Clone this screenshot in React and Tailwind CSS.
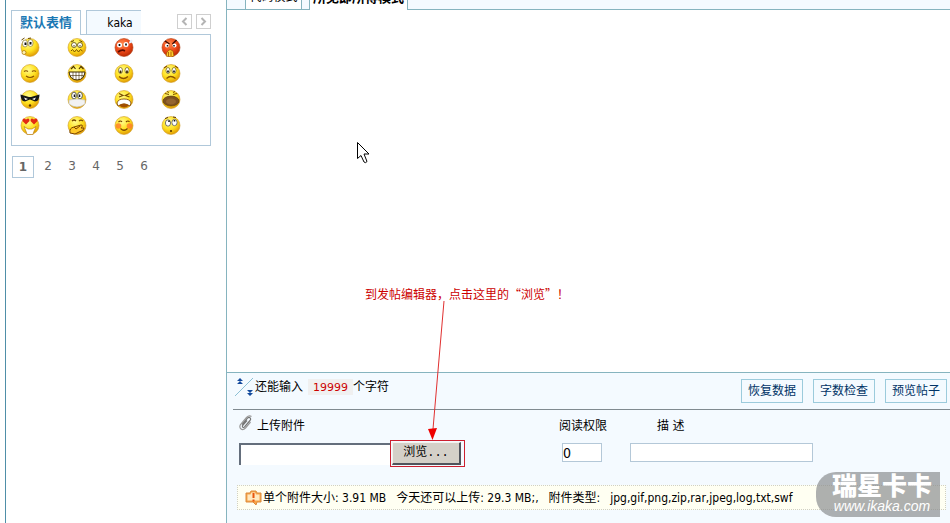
import { useState } from "react";

const smileys = [
  {
    name: "whistle",
    features: (
      <>
        <ellipse cx="5" cy="6.500" rx="2.600" ry="3.500" fill="#fff" stroke="#8a7a30" strokeWidth=".7" />
        <ellipse cx="10.500" cy="6" rx="2.600" ry="3.500" fill="#fff" stroke="#8a7a30" strokeWidth=".7" />
        <path d="M5.500 5.500v2.500M10.500 5v2.500" stroke="#111" strokeWidth="2" />
        <path d="M1.500 3l3-2M8 1.500l3-.5" stroke="#6b4a00" />
        <circle cx="4" cy="15.500" r="2" fill="#fff3b0" stroke="#a87000" strokeWidth=".7" />
      </>
    ),
  },
  {
    name: "queasy",
    features: (
      <>
        <circle cx="7" cy="8" r="2.500" fill="#fff" stroke="#5b4700" strokeWidth=".8" />
        <circle cx="13" cy="8" r="2.500" fill="#fff" stroke="#5b4700" strokeWidth=".8" />
        <path d="M7 8v1.500M13 8v1.500M4 5l3-1.500M12.500 3.500L15.500 5" stroke="#5b4700" />
        <path d="M4 14l1.500-1.500L7.500 15l2-2.500 2 2.500 2-2.500 2 1.500" stroke="#7a4b00" />
      </>
    ),
  },
  {
    name: "embarrassed",
    red: true,
    features: (
      <>
        <circle cx="5.500" cy="8" r="2.500" fill="#fff" />
        <circle cx="12" cy="7.500" r="2.500" fill="#fff" />
        <path d="M5.500 7v2M12 6.500v2" stroke="#111" strokeWidth="1.700" />
        <path d="M4 15q4-3 7-1" stroke="#5a0b00" strokeWidth="1.700" />
        <path d="M15 6.500q5-1 3-4-3 1-3 4z" fill="#e4f0ff" />
      </>
    ),
  },
  {
    name: "furious",
    red: true,
    features: (
      <>
        <path d="M4 4l4.500 3M15.500 3l-4 4" stroke="#3a0900" strokeWidth="1.500" />
        <circle cx="6" cy="8.500" r="2" fill="#fff" />
        <circle cx="13.500" cy="8.500" r="2" fill="#fff" />
        <path d="M6.500 8v1.500M13 8v1.500" stroke="#111" strokeWidth="1.500" />
        <path d="M5 19l1-4 3-2.500 3 1.500 1 5-3 1z" fill="#ffd02e" stroke="#a14a00" strokeWidth=".7" />
        <path d="M7.500 15v4M10 14.500V19" stroke="#a14a00" strokeWidth=".8" />
      </>
    ),
  },
  {
    name: "content",
    features: (
      <path d="M4 8.500q2-1.500 4 0M12 8.500q2-1.500 4 0M6 13q4 3 8 0" stroke="#8a5200" strokeWidth="1.200" />
    ),
  },
  {
    name: "grin",
    features: (
      <>
        <path d="M4 6l2.500-2.500L8.500 6M12 6l2-2.500L16.500 6" stroke="#4a3000" strokeWidth="1.200" />
        <path d="M2 9h16q-1 8-8 8T2 9z" fill="#fff" stroke="#3f2b00" />
        <path d="M3 12.500h14M6 9v7M9 9v8M12 9v8M15 9v6.500" stroke="#3f2b00" strokeWidth=".6" />
      </>
    ),
  },
  {
    name: "smile",
    features: (
      <>
        <ellipse cx="6.500" cy="7.500" rx="2" ry="3" fill="#fff" stroke="#665100" strokeWidth=".7" />
        <ellipse cx="13" cy="7.500" rx="2" ry="3" fill="#fff" stroke="#665100" strokeWidth=".7" />
        <path d="M6.500 7.500v2.500M13 7.500v2.500" stroke="#3d2900" strokeWidth="1.800" />
        <path d="M5 13.500q4.500 4 9 0" stroke="#8a5200" strokeWidth="1.200" />
      </>
    ),
  },
  {
    name: "sad",
    features: (
      <>
        <ellipse cx="7" cy="7.500" rx="2" ry="3" fill="#fff" stroke="#665100" strokeWidth=".7" />
        <ellipse cx="13" cy="7.500" rx="2" ry="3" fill="#fff" stroke="#665100" strokeWidth=".7" />
        <path d="M7 7.500v2M13 7.500v2" stroke="#222" strokeWidth="1.800" />
        <path d="M3 5l3-2M14 3l3 2M5.500 15.500q4-4 9 0" stroke="#8a5200" strokeWidth="1.200" />
      </>
    ),
  },
  {
    name: "ninja",
    features: (
      <>
        <path d="M.5 5.500L9 8h2l8.500-2.500q0 6.500-4.500 7L10 10.500l-5 2Q.5 12 .5 5.500z" fill="#161616" />
        <path d="M4 8.500l4 1.500-2.500 1zM16 8.500L12 10l2.500 1z" fill="#fff" />
        <circle cx="10" cy="16.500" r="1.200" fill="#5a3500" />
      </>
    ),
  },
  {
    name: "mask",
    features: (
      <>
        <ellipse cx="7" cy="6.500" rx="2.400" ry="3.400" fill="#fff" stroke="#333" strokeWidth=".8" />
        <ellipse cx="13" cy="6.500" rx="2.400" ry="3.400" fill="#fff" stroke="#333" strokeWidth=".8" />
        <path d="M7.500 5.500v2.500M12.500 5.500v2.500" stroke="#111" strokeWidth="1.600" />
        <path d="M2 11q8-2 16 0v4q-8 6-16 0z" fill="#f2f2f2" stroke="#c4c0b0" strokeWidth=".7" />
      </>
    ),
  },
  {
    name: "crying",
    features: (
      <>
        <path d="M5 4.500l4 2-4 1.500M15.500 4.500l-4 2 4 1.500" stroke="#7a4b00" strokeWidth="1.200" />
        <path d="M3 14q1-4 7-4t7 4l-1 3q-6-4-12 0z" fill="#fff" stroke="#7a4300" strokeWidth=".8" />
        <path d="M5 16.500q5-4 10 0-5 4-10 0z" fill="#a04e00" />
      </>
    ),
  },
  {
    name: "yawn",
    features: (
      <>
        <path d="M4 4.500l4 1M16 4.500l-4 1M6 2.500l2 1M14 2.500l-2 1" stroke="#7a4b00" />
        <ellipse cx="10" cy="12" rx="8" ry="5" fill="#7c501f" stroke="#553300" strokeWidth=".6" />
        <ellipse cx="10" cy="12.500" rx="5" ry="3" fill="#94652f" />
      </>
    ),
  },
  {
    name: "love",
    features: (
      <>
        <path d="M6 9.500L2.500 6q0-4 3.500-1.500Q9.500 2 9.500 6zM14 9.500L10.500 6q0-4 3.500-1.500 3.500-2.500 3.500 1.500z" fill="#e32a12" />
        <path d="M4 11.500l4 2.500h4l4-2.500-2.500 6-.5 2H7l-.5-2z" fill="#fff" stroke="#b07000" strokeWidth=".6" />
      </>
    ),
  },
  {
    name: "giggle",
    features: (
      <>
        <path d="M5 6q2-2 4 0M12 6q2-2 4 0" stroke="#7a4b00" strokeWidth="1.200" />
        <path d="M3 18q-1-5 4-6l7-2q3 0 0 3h3q0 3-5 4l-4 2z" fill="#ffc928" stroke="#7a4300" />
        <path d="M7 12l2 2 4-3" stroke="#7a4300" />
      </>
    ),
  },
  {
    name: "blush",
    features: (
      <>
        <circle cx="4.500" cy="11" r="2.800" fill="#ff7a2a" opacity=".8" />
        <circle cx="15.500" cy="11" r="2.800" fill="#ff7a2a" opacity=".8" />
        <path d="M4.500 7q2-2 3.500 0M12 7q2-2 3.500 0M6.500 13.500q3.500 3.500 7 0" stroke="#7a4300" strokeWidth="1.200" />
      </>
    ),
  },
  {
    name: "wonder",
    features: (
      <>
        <ellipse cx="7" cy="8" rx="2.600" ry="3.200" fill="#fff" stroke="#555" strokeWidth=".8" />
        <ellipse cx="13.500" cy="7.500" rx="2.600" ry="3.200" fill="#fff" stroke="#555" strokeWidth=".8" />
        <path d="M8 5.500v1.500M13.500 5v1.500" stroke="#111" strokeWidth="1.500" />
        <path d="M4 3.500l3-1M12 2l3 .5" stroke="#5b3500" />
        <circle cx="10" cy="16" r="1.100" fill="#5a3500" />
      </>
    ),
  },
];

const extraPages = [2, 3, 4, 5, 6];

function Smiley({ name, red, features }) {
  return (
    <svg viewBox="0 0 20 20" className="size-5" fill="none">
      <defs>
        <radialGradient id={`face-${name}`} cx=".4" cy=".3" r=".75">
          <stop offset="0" stopColor={red ? "#ff8a4c" : "#fffb8c"} />
          <stop offset=".55" stopColor={red ? "#ee4a1a" : "#ffe01f"} />
          <stop offset="1" stopColor={red ? "#b52600" : "#dc9100"} />
        </radialGradient>
      </defs>
      <circle cx="10" cy="10.500" r="9" fill={`url(#face-${name})`} stroke={red ? "#b03a10" : "#cf9a20"} strokeWidth=".6" />
      {features}
    </svg>
  );
}

function Chevron({ d }) {
  return (
    <svg viewBox="0 0 13 13" className="size-[13px]" fill="none">
      <path d={d} stroke="#b4b4b4" strokeWidth="2" />
    </svg>
  );
}

function SmileyPanel() {
  const [page, setPage] = useState(1);

  return (
    <aside className="ml-[5px] w-[221px] shrink-0 border-l border-[#4f8fa8] pt-2.5 pl-[5px]">
      <div className="w-[200px]">
        <div className="flex items-end">
          <button className="relative z-10 -mb-px h-[25px] w-[70px] border border-b-0 border-[#b0c8da] bg-white text-center text-[13px] font-bold text-[#1a78b4]">
            默认表情
          </button>
          <button className="ml-[5px] h-6 w-[55px] border-t border-l border-[#b0c8da] bg-[#f4faff] pl-3 text-black">
            kaka
          </button>
          <div className="mb-[5px] ml-auto flex gap-1">
            <button aria-label="上一组" className="border border-[#cfcfcf] bg-white">
              <Chevron d="M8.500 3L5 6.500 8.500 10" />
            </button>
            <button aria-label="下一组" className="border border-[#cfcfcf] bg-white">
              <Chevron d="M4.500 3L8 6.500 4.500 10" />
            </button>
          </div>
        </div>

        <div className="grid h-28 grid-cols-[repeat(4,47px)] content-start gap-y-1.5 border border-[#b0c8da] pt-0.5 pl-2">
          {smileys.map((smiley) => (
            <button key={smiley.name} aria-label={smiley.name} className="size-5">
              <Smiley {...smiley} />
            </button>
          ))}
        </div>

        {/* Pages */}
        <div className="mt-2.5 ml-px flex items-center font-[family-name:'DejaVu_Sans',sans-serif] text-[#666]">
          <button onClick={() => setPage(1)} className="mr-0.5 size-[22px] border border-[#b0c8da] text-xs font-bold">
            1
          </button>
          {extraPages.map((number) => (
            <button
              key={number}
              onClick={() => setPage(number)}
              aria-current={page === number}
              className="w-6 pb-0.5 text-xs">
              {number}
            </button>
          ))}
        </div>
      </div>
    </aside>
  );
}

function ToolButton({ children }) {
  return (
    <button className="h-6 w-[62px] border border-[#9ccbdc] bg-[#f4faff] text-center text-[#003366]">
      {children}
    </button>
  );
}

function ModeTabs() {
  return (
    <div className="flex h-2.5 items-end border-b border-[#86b4bf] bg-[#f4faff] pl-[18px]">
      <button className="h-6 w-[57px] shrink-0 border-x border-[#86b4bf] bg-white whitespace-nowrap">
        代码模式
      </button>
      <button className="relative -mb-px ml-[7px] h-[25px] w-[99px] shrink-0 border-r border-l border-[#86b4bf] bg-white text-[13px] font-bold whitespace-nowrap">
        所见即所得模式
      </button>
    </div>
  );
}

function StatusBar() {
  return (
    <div className="ml-1.5 flex h-[37px] items-center border-b border-[#808a90]">
      <div className="-mt-2 flex items-center">
        <svg viewBox="0 0 22 20" className="w-[22px]" fill="none">
          <path d="M2 19L20 1" stroke="#8cc0d4" />
          <path d="M7 1l3 3H4zM7 4l3 3H4zM17 19l3-3h-6zM17 16l3-3h-6z" fill="#144a9c" />
        </svg>
        <label htmlFor="remaining">还能输入</label>
        <input
          id="remaining"
          readOnly
          defaultValue="19999"
          className="ml-[5px] h-4 w-[45px] bg-[#f0f0f0] text-center font-[family-name:'DejaVu_Sans',sans-serif] text-[11px] text-[#cc0000]"
        />
        <span>个字符</span>
      </div>
      <div className="mr-[3px] ml-auto flex gap-2.5">
        <ToolButton>恢复数据</ToolButton>
        <ToolButton>字数检查</ToolButton>
        <ToolButton>预览帖子</ToolButton>
      </div>
    </div>
  );
}

function UploadForm() {
  return (
    <div className="flex pt-[5px] pl-3">
      <div className="w-[319px] shrink-0">
        <div className="flex h-[21px] items-center">
          <svg viewBox="0 0 14 16" className="mr-1 mb-1.5 w-3.5" fill="none" stroke="#777" strokeWidth="1.200">
            <path d="M3 9.500L8.500 3q2-1.500 3 .5.500 1-.5 2L5.500 12q-1.500 1-2 0t.5-2l4-4.500" />
            <path d="M11.500 7L6.500 13q-2.500 2.500-4.500 1t-.5-4.500L7.500 2.500Q10 0 12.500 1.500" stroke="#999" />
          </svg>
          <label htmlFor="attachment">上传附件</label>
        </div>
        <div className="mt-1 flex items-center">
          <input
            id="attachment"
            className="h-[22px] w-[151px] border-t-2 border-l-2 border-[#646e7c] bg-white"
          />
          <div className="border border-[#cc2030] py-px pr-[3px] pl-px">
            <button className="block h-[23px] w-[69px] border-t border-r-2 border-b-2 border-l border-t-[#f4f2ee] border-r-[#50545c] border-b-[#50545c] border-l-[#f4f2ee] bg-[#d4d0c8] text-center font-[family-name:'Liberation_Mono','Noto_Sans_CJK_SC',monospace]">
              浏览...
            </button>
          </div>
        </div>
      </div>
      <div className="w-[68px]">
        <label htmlFor="permission" className="flex h-[21px] items-center pl-px">阅读权限</label>
        <input
          id="permission"
          defaultValue="0"
          className="mt-[7px] ml-1 block h-[19px] w-10 border border-[#b4c8d8] bg-white text-sm"
        />
      </div>
      <div className="w-[187px]">
        <label htmlFor="description" className="flex h-[21px] items-center pl-[31px]">描 述</label>
        <input
          id="description"
          className="mt-[7px] ml-1 block h-[19px] w-[183px] border border-[#b4c8d8] bg-white"
        />
      </div>
    </div>
  );
}

function UploadNotice() {
  return (
    <div className="mt-[18px] mr-1 ml-2.5 flex h-[25px] items-center gap-2.5 border border-dotted border-[#d0d0c4] bg-[#fffff2] pl-[7px] whitespace-pre">
      <span className="flex items-center">
        <svg viewBox="0 0 17 16" className="mr-px w-[17px]" fill="none">
          <path d="M1 3h4l1-2h5l1 2h4v9h-4l-1 3-3-3H1z" fill="#f7a54a" stroke="#dc8a3c" />
          <path d="M2.500 4.500h3l1-2h3.500l1 2h3.500v6H2.500z" fill="#ffe9c0" />
          <path d="M8.500 3v5M8.500 9.500v2" stroke="#e8540c" strokeWidth="2" />
        </svg>
        单个附件大小: 3.91 MB
      </span>
      <span>今天还可以上传: 29.3 MB;,</span>
      <span>附件类型:</span>
      <span>jpg,gif,png,zip,rar,jpeg,log,txt,swf</span>
    </div>
  );
}

function Annotation() {
  return (
    <div className="pointer-events-none absolute inset-0">
      <svg viewBox="0 0 13 22" className="absolute top-[142px] left-[357px] w-[13px]" fill="#fff" stroke="#000">
        <path d="M.5.500v16l3.500-3 3 6.500q1.500 1.500 3-.5L7 12h5z" />
      </svg>
      <p className="absolute top-[285px] left-[365px] font-[family-name:'Noto_Sans_CJK_SC',sans-serif] leading-[18px] whitespace-nowrap text-[#cc0000]">
        到发帖编辑器，点击这里的“浏览”！
      </p>
      <svg viewBox="0 0 20 140" className="absolute top-[301px] left-[427px] w-5" fill="none">
        <path d="M17 0L6 128" stroke="#e03030" />
        <path d="M1 128l9-1-4.500 12z" fill="#ee0000" />
      </svg>
    </div>
  );
}

function Watermark() {
  return (
    <div className="absolute right-2.5 bottom-1.5 flex h-[45px] w-[124px] flex-col items-center justify-center rounded-l-[20px] bg-[#8c8f92]/70 pl-2 text-white">
      <span className="text-[25px] leading-[22px] font-black">瑞星卡卡</span>
      <span className="font-[family-name:'Liberation_Sans',sans-serif] text-sm leading-4 font-medium italic">
        www.ikaka.com
      </span>
    </div>
  );
}

export default function App() {
  return (
    <div className="relative flex min-h-screen overflow-hidden bg-white font-[family-name:'DejaVu_Sans_Condensed','Noto_Sans_CJK_SC',sans-serif] text-xs text-black">
      <SmileyPanel />
      <main className="flex min-w-0 flex-1 flex-col border-l border-[#86b4bf] bg-[#f4faff]">
        <ModeTabs />
        <textarea
          aria-label="帖子内容"
          className="block h-[363px] w-full resize-none border-b border-[#86b4bf] bg-white"
        />
        <StatusBar />
        <UploadForm />
        <UploadNotice />
      </main>
      <Annotation />
      <Watermark />
    </div>
  );
}
